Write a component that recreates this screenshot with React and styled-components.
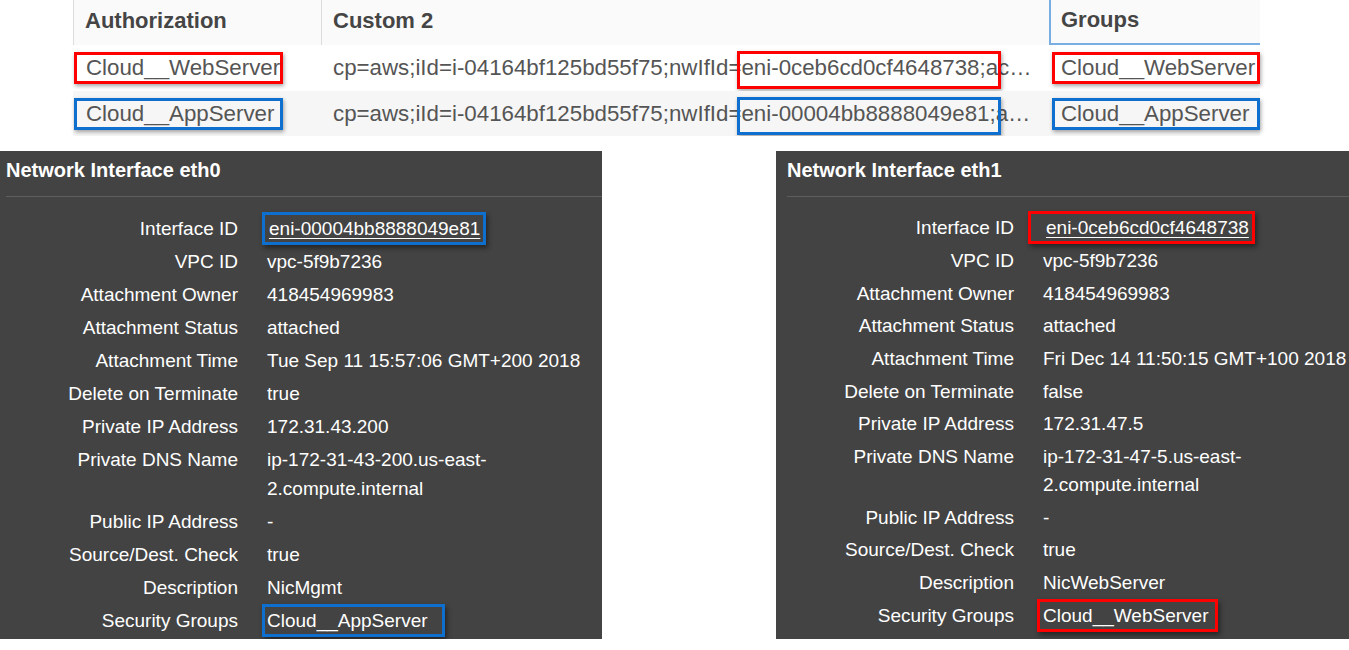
import React from "react";
import styled, { createGlobalStyle } from "styled-components";

const RED = "#ff0000";
const BLUE = "#0e6fcf";

const Global = createGlobalStyle`
  html, body { margin: 0; padding: 0; background: #fff; overflow: hidden; }
  * { box-sizing: border-box; }
`;

const Page = styled.div`
  width: 1349px;
  height: 650px;
  display: flex;
  flex-direction: column;
  font-family: "Liberation Sans", Arial, sans-serif;
`;

/* ---------- top table ---------- */
const Table = styled.div`
  margin-left: 73px;
  width: 1187px;
  display: grid;
  grid-template-columns: 248px 728px 211px;
  grid-template-rows: 45px 46px 45px;
`;

const HeadCell = styled.div`
  display: flex;
  align-items: center;
  padding: 0 0 4px ${(p) => (p.$active ? 10 : 11)}px;
  background: #fafafa;
  border-left: ${(p) => (p.$active ? "2px solid #79aee3" : "1px solid #dcdcdc")};
  border-bottom: ${(p) => (p.$active ? "2px solid #79aee3" : "none")};
  font-size: 22px;
  font-weight: bold;
  color: #454545;
`;

const BodyCell = styled.div`
  display: flex;
  align-items: center;
  padding-left: ${(p) => p.$pl}px;
  background: ${(p) => (p.$alt ? "#f6f6f6" : "#fff")};
  font-size: 22.3px;
  color: #555;
`;

const TextCell = styled.div`
  background: ${(p) => (p.$alt ? "#f6f6f6" : "#fff")};
  padding: 0 9px 0 12px;
  font-size: 22.3px;
  line-height: ${(p) => p.$h}px;
  color: #555;
  white-space: nowrap;
  overflow: hidden;
  text-overflow: ellipsis;
`;

const TagBox = styled.div`
  width: ${(p) => p.$w}px;
  height: 32px;
  display: flex;
  align-items: center;
  padding-left: ${(p) => p.$pl}px;
  border: 3px solid ${(p) => p.$color};
  box-shadow: 1px 2px 4px rgba(0, 0, 0, 0.35);
  white-space: nowrap;
`;

const Mark = styled.span`
  position: relative;
  &::after {
    content: "";
    position: absolute;
    left: -4px;
    top: -4px;
    width: 258px;
    height: 32px;
    border: 3px solid ${(p) => p.$color};
    box-shadow: 1px 2px 4px rgba(0, 0, 0, 0.35);
  }
`;

/* ---------- panels ---------- */
const PanelRow = styled.div`
  margin-top: 15px;
  display: flex;
  justify-content: space-between;
`;

const Panel = styled.section`
  width: ${(p) => p.$w}px;
  height: 488px;
  background: #434343;
  color: #fff;
  display: flex;
  flex-direction: column;
  overflow: hidden;
`;

const PanelTitle = styled.div`
  height: 45px;
  display: flex;
  align-items: center;
  padding: 0 0 6px ${(p) => p.$inset}px;
  font-size: 20px;
  font-weight: bold;
  white-space: nowrap;
`;

const Divider = styled.div`
  height: 1px;
  margin-left: ${(p) => p.$inset}px;
  background: #5e5e5e;
`;

const PanelBody = styled.div`
  padding-top: 15px;
  display: flex;
  flex-direction: column;
`;

const Row = styled.div`
  display: grid;
  grid-template-columns: 238px 1fr;
  column-gap: 29px;
  padding: ${(p) => p.$pad}px 0;
  font-size: 19px;
  line-height: ${(p) => p.$lh}px;
`;

const Label = styled.div`
  text-align: right;
  white-space: nowrap;
`;

const Value = styled.div`
  white-space: pre-line;
`;

const Outline = styled.span`
  display: inline-block;
  line-height: 27px;
  margin: -3px 0 -3px ${(p) => p.$ml}px;
  padding: 0 ${(p) => p.$pr}px 0 ${(p) => p.$pl}px;
  border: 3px solid ${(p) => p.$color};
  box-shadow: 2px 3px 5px rgba(0, 0, 0, 0.45);
`;

const Link = styled.a`
  color: #fff;
  text-decoration: underline;
  text-underline-offset: 3px;
  text-decoration-thickness: 1px;
`;

const tableRows = [
  {
    group: "Cloud__WebServer",
    color: RED,
    prefix: "cp=aws;iId=i-04164bf125bd55f75;nwIfId=",
    eni: "eni-0ceb6cd0cf4648738",
    rest: ";acctId=418454969983;region=us-east-2",
    h: 46,
  },
  {
    group: "Cloud__AppServer",
    color: BLUE,
    prefix: "cp=aws;iId=i-04164bf125bd55f75;nwIfId=",
    eni: "eni-00004bb8888049e81",
    rest: ";acctId=418454969983;region=us-east-2",
    h: 45,
    alt: true,
  },
];

const panels = [
  {
    w: 602,
    inset: 6,
    title: "Network Interface eth0",
    color: BLUE,
    lh: 29,
    pad: 2,
    id: { text: "eni-00004bb8888049e81", ml: -5, pl: 4, pr: 3 },
    sg: { text: "Cloud__AppServer", ml: -5, pl: 2, pr: 14 },
    rows: [
      ["VPC ID", "vpc-5f9b7236"],
      ["Attachment Owner", "418454969983"],
      ["Attachment Status", "attached"],
      ["Attachment Time", "Tue Sep 11 15:57:06 GMT+200 2018"],
      ["Delete on Terminate", "true"],
      ["Private IP Address", "172.31.43.200"],
      ["Private DNS Name", "ip-172-31-43-200.us-east-\n2.compute.internal"],
      ["Public IP Address", "-"],
      ["Source/Dest. Check", "true"],
      ["Description", "NicMgmt"],
    ],
  },
  {
    w: 573,
    inset: 11,
    title: "Network Interface eth1",
    color: RED,
    lh: 28,
    pad: 2.33,
    id: { text: "eni-0ceb6cd0cf4648738", ml: -15, pl: 15, pr: 3 },
    sg: { text: "Cloud__WebServer", ml: -6, pl: 3, pr: 7 },
    rows: [
      ["VPC ID", "vpc-5f9b7236"],
      ["Attachment Owner", "418454969983"],
      ["Attachment Status", "attached"],
      ["Attachment Time", "Fri Dec 14 11:50:15 GMT+100 2018"],
      ["Delete on Terminate", "false"],
      ["Private IP Address", "172.31.47.5"],
      ["Private DNS Name", "ip-172-31-47-5.us-east-\n2.compute.internal"],
      ["Public IP Address", "-"],
      ["Source/Dest. Check", "true"],
      ["Description", "NicWebServer"],
    ],
  },
];

function InterfacePanel({ p }) {
  return (
    <Panel $w={p.w}>
      <PanelTitle $inset={p.inset}>{p.title}</PanelTitle>
      <Divider $inset={p.inset} />
      <PanelBody>
        <Row $lh={p.lh} $pad={p.pad}>
          <Label>Interface ID</Label>
          <Value>
            <Outline $color={p.color} $ml={p.id.ml} $pl={p.id.pl} $pr={p.id.pr}>
              <Link href="#">{p.id.text}</Link>
            </Outline>
          </Value>
        </Row>
        {p.rows.map(([l, v]) => (
          <Row key={l} $lh={p.lh} $pad={p.pad}>
            <Label>{l}</Label>
            <Value>{v}</Value>
          </Row>
        ))}
        <Row $lh={p.lh} $pad={p.pad}>
          <Label>Security Groups</Label>
          <Value>
            <Outline $color={p.color} $ml={p.sg.ml} $pl={p.sg.pl} $pr={p.sg.pr}>
              {p.sg.text}
            </Outline>
          </Value>
        </Row>
      </PanelBody>
    </Panel>
  );
}

export default function App() {
  return (
    <Page>
      <Global />
      <Table>
        <HeadCell>Authorization</HeadCell>
        <HeadCell>Custom 2</HeadCell>
        <HeadCell $active>Groups</HeadCell>
        {tableRows.map((r) => (
          <React.Fragment key={r.eni}>
            <BodyCell $alt={r.alt} $pl={1}>
              <TagBox $color={r.color} $w={209} $pl={9}>
                {r.group}
              </TagBox>
            </BodyCell>
            <TextCell $alt={r.alt} $h={r.h}>
              {r.prefix}
              <Mark $color={r.color}>{r.eni}</Mark>
              {r.rest}
            </TextCell>
            <BodyCell $alt={r.alt} $pl={3}>
              <TagBox $color={r.color} $w={208} $pl={6}>
                {r.group}
              </TagBox>
            </BodyCell>
          </React.Fragment>
        ))}
      </Table>
      <PanelRow>
        {panels.map((p) => (
          <InterfacePanel key={p.title} p={p} />
        ))}
      </PanelRow>
    </Page>
  );
}
